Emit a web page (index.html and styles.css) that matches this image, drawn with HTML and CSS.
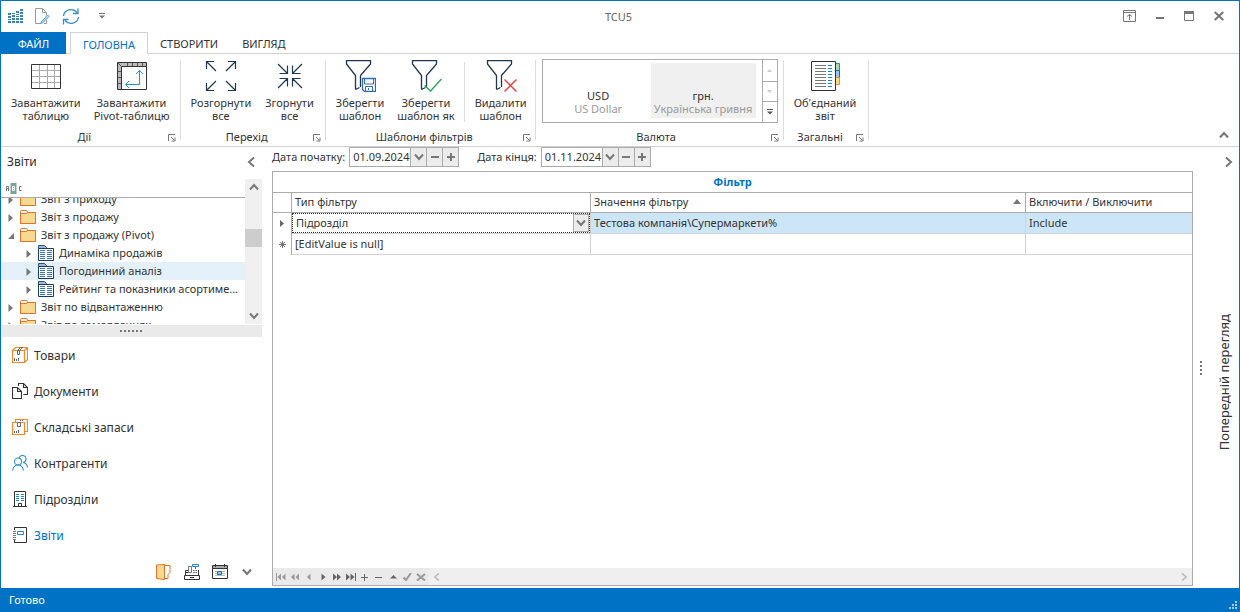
FILE: index.html
```
<!DOCTYPE html>
<html lang="uk">
<head>
<meta charset="utf-8">
<title>TCU5</title>
<link rel="stylesheet" href="styles.css">
</head>
<body>
<svg class="defs" aria-hidden="true">
  <symbol id="launcher" viewBox="0 0 8 8"><path d="M.5 7V.5H7M3 3l3.5 3.5M7 3.5V7H3.5" fill="none" stroke="#777"/></symbol>
  <symbol id="funnel" viewBox="0 0 32 32"><path d="M11.5 29.5V15.5L2.5 4V.5H26.5V4L16.5 15.5V27M11.5 29.5l4-2" fill="none" stroke="#1f3550" stroke-width="1.3"/></symbol>
  <symbol id="chev-down" viewBox="0 0 10 8"><path d="M1 1.5L5 6l4-4.500" fill="none" stroke="#777" stroke-width="2"/></symbol>
  <symbol id="chev-left" viewBox="0 0 8 10"><path d="M7 .5L2 5l5 4.500" fill="none" stroke="currentColor" stroke-width="2"/></symbol>
  <symbol id="chev-right" viewBox="0 0 8 10"><path d="M1 .5L6 5 1 9.500" fill="none" stroke="currentColor" stroke-width="2"/></symbol>
  <symbol id="folder" viewBox="0 0 16 14"><path d="M.5 13.500V1.500Q.5.5 1.500.5H6.500L8 2.500H15.500V13.500Z" fill="#fff" stroke="#e07328"/><path d="M1 3.500H7L9 2.500H15.500V13.500H1Z" fill="#f8d990"/><path d="M.5 13.500V3.500H6L8 2.500H15.500V13.500Z" fill="none" stroke="#e07328"/></symbol>
  <symbol id="report" viewBox="0 0 16 16"><path d="M.5 4V.5H6.500L8.500 2.500V4" fill="#9dbbdc" stroke="#2b527e"/><path d="M.5 3.500H15.500V15.500H.5Z" fill="#fff" stroke="#1f3a5c"/><path d="M2 5.500h5M9 5.500h5M2 7.500h5M9 7.500h5M2 9.500h5M9 9.500h5M2 11.500h5M9 11.500h5M2 13.500h5M9 13.500h5" stroke="#3c77b5"/></symbol>
  <symbol id="closed" viewBox="0 0 5 8"><path d="M0 0L4.500 4 0 8Z" fill="#777"/></symbol>
</svg>
<div class="app">
  <header class="titlebar">
    <div class="quick">
      <svg width="15" height="14" viewBox="0 0 15 14"><g fill="#3f81ad"><path d="M0 4h3v2H0zM0 7h3v2H0zM0 10h3v1H0zM0 12h3v2H0zM4 4h3v1H4zM4 6h3v2H4zM4 9h3v2H4zM4 12h3v2H4zM8 2h3v2H8zM8 5h3v1H8zM8 7h3v1H8zM8 9h3v2H8zM8 12h3v2H8zM12 0h3v2h-3zM12 3h3v2h-3zM12 6h3v2h-3zM12 9h3v2h-3zM12 12h3v2h-3z"/></g></svg>
      <svg width="15" height="16" viewBox="0 0 15 16"><path d="M5 15.500H.5V.5H7.500L11.500 4.500V7M7.500.5V4.500H11.500M11.500 12v3.500H9" fill="none" stroke="#999"/><path d="M6 14.500L12.500 7 14 8.500 7.500 15 5.500 15.500Z" fill="#cfe6f6" stroke="#4a92c8"/></svg>
      <svg width="18" height="17" viewBox="0 0 18 17"><path d="M1.500 8A7.500 7 0 0 1 15 4.500M16.500 9A7.500 7 0 0 1 3 12.500M16 .5V5.500H11M1.500 16.500V11.500H6.500" fill="none" stroke="#3d8cc4" stroke-width="1.300"/></svg>
      <svg class="quick-more" width="6" height="6" viewBox="0 0 6 6"><path d="M0 0h6v1H0zM0 2.500h6L3 5.500z" fill="#777"/></svg>
    </div>
    <h1 class="title">TCU5</h1>
    <div class="window-buttons">
      <svg width="13" height="12" viewBox="0 0 13 12"><path d="M.5.5h12v11H.5zM.5 2.500h12M6.500 10V4.500M4 6.500l2.500-2 2.500 2" fill="none" stroke="#777"/></svg>
      <svg width="8" height="12" viewBox="0 0 8 12"><path d="M0 7h8v2H0z" fill="#777"/></svg>
      <svg width="10" height="10" viewBox="0 0 10 10"><path d="M.5.5h9v9h-9z" fill="none" stroke="#777"/><path d="M0 0h10v3H0z" fill="#777"/></svg>
      <svg width="10" height="10" viewBox="0 0 10 10"><path d="M.7 1L9.300 9M9.300 1L.7 9" stroke="#777" stroke-width="2.200"/></svg>
    </div>
  </header>

  <nav class="tabs">
    <button class="tab tab-file">ФАЙЛ</button>
    <button class="tab tab-active">ГОЛОВНА</button>
    <button class="tab">СТВОРИТИ</button>
    <button class="tab">ВИГЛЯД</button>
  </nav>

  <section class="ribbon">
    <div class="group">
      <div class="tools">
        <button class="tool">
          <svg width="32" height="32" viewBox="0 0 32 32"><path d="M9.500 4v25M17.500 4v25M24.500 4v25M1 10.500h30M1 16.500h30M1 22.500h30" stroke="#aaa"/><path d="M1.500 4.500h29v24h-29z" fill="none" stroke="#333"/></svg>
          <span>Завантажити<br>таблицю</span>
        </button>
        <button class="tool">
          <svg width="32" height="32" viewBox="0 0 32 32"><path d="M1.500 2.500h29v4H5.500v23h-4z" fill="#bbb"/><path d="M11.500 3v3M16.500 3v3M21.500 3v3M26.500 3v3M2 11.500h3M2 17.500h3M2 23.500h3M2 3l3 3" stroke="#555"/><path d="M1.500 2.500h29v27h-29zM5.500 29V6.500h25" fill="none" stroke="#333"/><path d="M23.500 11V24.500H10M20 14l3.500-3.500L27 14M13 21l-3.500 3.500L13 28" fill="none" stroke="#2f8fd0"/></svg>
          <span>Завантажити<br>Pivot-таблицю</span>
        </button>
      </div>
      <div class="caption"><span>Дії</span><svg width="8" height="8"><use href="#launcher"/></svg></div>
    </div>
    <span class="sep"></span>
    <div class="group">
      <div class="tools tools-expand">
        <button class="tool">
          <svg width="32" height="32" viewBox="0 0 32 32"><path d="M11 11L1.500 1.500M9 1.500H1.500V9M21 11l9.500-9.500M23 1.500h7.500V9M11 21l-9.500 9.500M9 30.500H1.500V23M21 21l9.500 9.500M23 30.500h7.500V23" fill="none" stroke="#1f3550" stroke-width="1.200"/></svg>
          <span>Розгорнути<br>все</span>
        </button>
        <button class="tool">
          <svg width="32" height="32" viewBox="0 0 32 32"><path d="M4 4l9.500 9.500M5.500 13.500h8V5.500M28 4l-9.500 9.500M26.500 13.500h-8V5.500M4 28l9.500-9.500M5.500 18.500h8v8M28 28l-9.500-9.500M26.500 18.500h-8v8" fill="none" stroke="#1f3550" stroke-width="1.200"/></svg>
          <span>Згорнути<br>все</span>
        </button>
      </div>
      <div class="caption"><span>Перехід</span><svg width="8" height="8"><use href="#launcher"/></svg></div>
    </div>
    <span class="sep"></span>
    <div class="group">
      <div class="tools tools-filter">
        <button class="tool">
          <svg width="32" height="32" viewBox="0 0 32 32"><use href="#funnel"/><path d="M18.500 18.500h13v13h-11l-2-2z" fill="#fff" stroke="#2f6db0" stroke-width="1.300"/><path d="M20.500 19v5h9v-5M21.500 31v-4.500h7V31M24.500 28v2" fill="none" stroke="#2f6db0"/></svg>
          <span>Зберегти<br>шаблон</span>
        </button>
        <button class="tool">
          <svg width="32" height="32" viewBox="0 0 32 32"><use href="#funnel"/><path d="M14.500 25.500l6 5.500L31.500 19" fill="none" stroke="#27a858" stroke-width="1.400"/></svg>
          <span>Зберегти<br>шаблон як</span>
        </button>
        <span class="sep sep-inner"></span>
        <button class="tool">
          <svg width="32" height="32" viewBox="0 0 32 32"><use href="#funnel"/><path d="M19.500 19.500l12 12M31.500 19.500l-12 12" stroke="#ea3d3d" stroke-width="1.400"/></svg>
          <span>Видалити<br>шаблон</span>
        </button>
      </div>
      <div class="caption"><span>Шаблони фільтрів</span><svg width="8" height="8"><use href="#launcher"/></svg></div>
    </div>
    <span class="sep"></span>
    <div class="group group-gallery">
      <div class="gallery">
        <button class="currency"><b>USD</b><i>US Dollar</i></button>
        <button class="currency currency-on"><b>грн.</b><i>Українська гривня</i></button>
        <div class="gallery-nav">
          <button aria-label="Вгору"><svg width="5" height="3" viewBox="0 0 5 3"><path d="M0 3L2.500 0 5 3z" fill="#ccc"/></svg></button>
          <button aria-label="Вниз"><svg width="5" height="3" viewBox="0 0 5 3"><path d="M0 0L2.500 3 5 0z" fill="#ccc"/></svg></button>
          <button aria-label="Більше"><svg width="6" height="6" viewBox="0 0 6 6"><path d="M0 0h6v1H0zM0 2.500h6L3 5.500z" fill="#555"/></svg></button>
        </div>
      </div>
      <div class="caption"><span>Валюта</span><svg width="8" height="8"><use href="#launcher"/></svg></div>
    </div>
    <span class="sep"></span>
    <div class="group">
      <div class="tools tools-report">
        <button class="tool">
          <svg width="32" height="32" viewBox="0 0 32 32"><path d="M26.500 3.500h4v7h-4z" fill="#a9d9b5" stroke="#27a04f"/><path d="M26.500 10.500h4v7h-4z" fill="#8fc8ea" stroke="#1a6cb0"/><path d="M26.500 17.500h4v7h-4z" fill="#fbd98a" stroke="#ee8a2c"/><path d="M2.500 1.500h24v29h-24z" fill="#fff" stroke="#333"/><path d="M6 5.500h11M6 8.500h11M6 11.500h11M6 14.500h11M6 17.500h11M6 20.500h11M6 23.500h11M6 26.500h11" stroke="#777"/><path d="M19 5.500h4M19 8.500h4M19 11.500h4M19 14.500h4M19 17.500h4M19 20.500h4M19 23.500h4M19 26.500h4" stroke="#1e86cc"/></svg>
          <span>Об'єднаний<br>звіт</span>
        </button>
      </div>
      <div class="caption"><span>Загальні</span><svg width="8" height="8"><use href="#launcher"/></svg></div>
    </div>
    <span class="sep"></span>
    <button class="ribbon-collapse" aria-label="Згорнути стрічку"><svg width="10" height="8" viewBox="0 0 10 8"><path d="M1 6.500L5 2l4 4.500" fill="none" stroke="#777" stroke-width="2"/></svg></button>
  </section>

  <div class="body">
    <aside class="sidebar">
      <div class="side-head"><h2>Звіти</h2><button aria-label="Згорнути панель"><svg width="8" height="10"><use href="#chev-left"/></svg></button></div>
      <div class="tree-area">
        <div class="tree-main">
          <div class="tree-filter">
            <svg width="16" height="11" viewBox="0 0 16 11"><path d="M4.500 0h6v11h-6z" fill="#72a896"/><path d="M.5 8V3.500h2V8M.5 5.500h2M15.500 3.500h-2v4h2" fill="none" stroke="#777"/><path d="M6.500 3.500h2v4h-2zM6.500 5.500h2" fill="none" stroke="#fff"/></svg>
          </div>
          <div class="tree-view">
            <ul class="tree">
              <li><svg class="arrow" width="5" height="8"><use href="#closed"/></svg><svg width="16" height="14"><use href="#folder"/></svg><span>Звіт з приходу</span></li>
              <li><svg class="arrow" width="5" height="8"><use href="#closed"/></svg><svg width="16" height="14"><use href="#folder"/></svg><span>Звіт з продажу</span></li>
              <li><svg class="arrow" width="6" height="6" viewBox="0 0 6 6"><path d="M6 0v6H0z" fill="#777"/></svg><svg width="16" height="14"><use href="#folder"/></svg><span>Звіт з продажу (Pivot)</span></li>
              <li class="child"><svg class="arrow" width="5" height="8"><use href="#closed"/></svg><svg width="16" height="16"><use href="#report"/></svg><span>Динаміка продажів</span></li>
              <li class="child selected"><svg class="arrow" width="5" height="8"><use href="#closed"/></svg><svg width="16" height="16"><use href="#report"/></svg><span>Погодинний аналіз</span></li>
              <li class="child"><svg class="arrow" width="5" height="8"><use href="#closed"/></svg><svg width="16" height="16"><use href="#report"/></svg><span>Рейтинг та показники асортименту</span></li>
              <li><svg class="arrow" width="5" height="8"><use href="#closed"/></svg><svg width="16" height="14"><use href="#folder"/></svg><span>Звіт по відвантаженню</span></li>
              <li><svg class="arrow" width="5" height="8"><use href="#closed"/></svg><svg width="16" height="14"><use href="#folder"/></svg><span>Звіт по замовленнях</span></li>
            </ul>
          </div>
        </div>
        <div class="scrollbar">
          <svg width="10" height="8" viewBox="0 0 10 8"><path d="M1 6.500L5 2l4 4.500" fill="none" stroke="#777" stroke-width="2"/></svg>
          <div class="track"><span class="thumb"></span></div>
          <svg width="10" height="8"><use href="#chev-down"/></svg>
        </div>
      </div>
      <div class="splitter"><svg width="23" height="2" viewBox="0 0 23 2"><path d="M0 1h23" stroke="#777" stroke-width="2" stroke-dasharray="2 2"/></svg></div>
      <nav class="modules">
        <a href="#"><svg width="16" height="16" viewBox="0 0 16 16"><path d="M.5 3.500h12v12H.5zM.5 3.500l3-3h12v12l-3 3M12.500 3.500l3-3" fill="none" stroke="#ee8a2c" stroke-width="1.200"/><path d="M5.500 3.500h2v4h-2zM5.500 3.500l3-3h2l-3 3M2.500 11v3M4.500 12v2M6.500 11v3" fill="none" stroke="#666"/></svg>Товари</a>
        <a href="#"><svg width="16" height="16" viewBox="0 0 16 16"><path d="M.5 4.500h5l4 4v7h-9zM5.500 4.500v4h4M6.500 3V.5h5l4 4v7h-4M11.500.5v4h4" fill="none" stroke="#333" stroke-width="1.100"/></svg>Документи</a>
        <a href="#"><svg width="16" height="16" viewBox="0 0 16 16"><path d="M.5 3.500h12v12H.5zM3.500 3V.5h12v12h-3" fill="none" stroke="#ee8a2c" stroke-width="1.200"/><path d="M5.500 3.500h3v4h-3zM8.500 1v1M10.500 1v1M2.500 12v2M4.500 12v2M6.500 11v3" fill="none" stroke="#666"/></svg>Складські запаси</a>
        <a href="#"><svg width="16" height="16" viewBox="0 0 16 16"><g fill="none" stroke="#3091cf" stroke-width="1.100"><circle cx="6" cy="6.500" r="3.500"/><path d="M.5 15.500Q1.500 10 6 10t5.500 5.500M7 3Q7.500.5 10.500.5 14 .5 14 4q0 3-3 3.500 4 .5 4.500 5"/></g></svg>Контрагенти</a>
        <a href="#"><svg width="16" height="16" viewBox="0 0 16 16"><path d="M2.500 15.500V.5h11v15M1 15.500h14M6.500 15.500v-3h3v3" fill="none" stroke="#333"/><path d="M4 3.500h3M9 3.500h3M4 5.500h3M9 5.500h3M4 7.500h3M9 7.500h3M4 9.500h3M9 9.500h3" stroke="#1e86cc"/></svg>Підрозділи</a>
        <a href="#" class="current"><svg width="16" height="16" viewBox="0 0 16 16"><path d="M2.500 3V.5h12v15h-12V13M2.500 15.500V14" fill="none" stroke="#333"/><path d="M1 4.500h3M1 6.500h3M1 8.500h3M1 10.500h3M1 12.500h3" stroke="#777"/><path d="M5.500 4.500h6v3h-6z" fill="none" stroke="#1e86cc"/></svg>Звіти</a>
      </nav>
      <div class="shortcuts">
        <svg width="16" height="16" viewBox="0 0 16 16"><path d="M9 1.500h5v7l-2 2v4H9" fill="#fff" stroke="#e07328"/><path d="M.5 1l8-.5v15l-8-1z" fill="#f8d990" stroke="#e07328"/></svg>
        <svg width="16" height="16" viewBox="0 0 16 16"><path d="M.5 11.500h15v4H.5zM1.500 11V6.500h3M1.500 8.500h3M14.500 6v5M6 13.500h4" fill="none" stroke="#333"/><path d="M4.500 8.500v-6h3v6z" fill="#fff" stroke="#777"/><path d="M8.500.5h6v2h-6zM11.500 3v2" fill="none" stroke="#1e86cc"/><path d="M9 6.500h4M9 8.500h4" stroke="#555" stroke-dasharray="1 .5"/></svg>
        <svg width="16" height="15" viewBox="0 0 16 15"><path d="M.5 1.500h15v3H.5z" fill="#aaa"/><path d="M.5 1.500h15v13H.5zM.5 4.500h15M3.500 0v3M12.500 0v3" fill="none" stroke="#333"/><path d="M3 7.500h10M3 9.500h10M3 11.500h10" stroke="#bbb"/><path d="M5.500 7.500h4v3h-4z" fill="#8fc8ea" stroke="#1a6cb0"/></svg>
        <svg width="10" height="8"><use href="#chev-down"/></svg>
      </div>
    </aside>

    <main class="content">
      <div class="dates">
        <label for="from">Дата початку:</label>
        <div class="datebox"><input id="from" type="text" value="01.09.2024"><button aria-label="Календар"><svg width="10" height="8"><use href="#chev-down"/></svg></button><button aria-label="Менше"><svg width="8" height="8" viewBox="0 0 8 8"><path d="M0 4h8" stroke="#777" stroke-width="2"/></svg></button><button aria-label="Більше"><svg width="8" height="8" viewBox="0 0 8 8"><path d="M0 4h8M4 0v8" stroke="#777" stroke-width="2"/></svg></button></div>
        <label for="to" class="label-to">Дата кінця:</label>
        <div class="datebox"><input id="to" type="text" value="01.11.2024"><button aria-label="Календар"><svg width="10" height="8"><use href="#chev-down"/></svg></button><button aria-label="Менше"><svg width="8" height="8" viewBox="0 0 8 8"><path d="M0 4h8" stroke="#777" stroke-width="2"/></svg></button><button aria-label="Більше"><svg width="8" height="8" viewBox="0 0 8 8"><path d="M0 4h8M4 0v8" stroke="#777" stroke-width="2"/></svg></button></div>
      </div>
      <div class="grid">
        <table>
          <colgroup><col class="c-mark"><col class="c-type"><col class="c-value"><col></colgroup>
          <thead>
            <tr><th colspan="4" class="band">Фільтр</th></tr>
            <tr><th></th><th>Тип фільтру</th><th><div class="sorted">Значення фільтру<svg width="8" height="5" viewBox="0 0 8 5"><path d="M0 5l4-5 4 5z" fill="#777"/></svg></div></th><th>Включити / Виключити</th></tr>
          </thead>
          <tbody>
            <tr class="row-on">
              <td class="mark"><svg width="4" height="7" viewBox="0 0 4 7"><path d="M0 0l4 3.500L0 7z" fill="#666"/></svg></td>
              <td class="edit"><div class="combo"><select aria-label="Тип фільтру"><option>Підрозділ</option></select><button aria-label="Відкрити"><svg width="10" height="8"><use href="#chev-down"/></svg></button></div></td>
              <td>Тестова компанія\Супермаркети%</td><td>Include</td>
            </tr>
            <tr>
              <td class="mark"><svg width="7" height="7" viewBox="0 0 7 7"><path d="M3.500 0v7M0 3.500h7M1 1l5 5M6 1L1 6" stroke="#777"/></svg></td>
              <td>[EditValue is null]</td><td></td><td></td>
            </tr>
          </tbody>
        </table>
        <div class="navigator">
          <div class="nav-tools">
            <svg width="10" height="8" viewBox="0 0 10 8"><path d="M0 0h1v8H0zM5 .5v7L1.500 4zM9.500 .5v7L6 4z" fill="#999"/></svg>
            <svg width="10" height="8" viewBox="0 0 10 8"><path d="M4.500 .5v7L1 4zM9 .5v7L5.500 4z" fill="#999"/></svg>
            <svg width="10" height="8" viewBox="0 0 10 8"><path d="M6.500 .5v7L3 4z" fill="#999"/></svg>
            <svg width="10" height="8" viewBox="0 0 10 8"><path d="M3.500 .5v7L7.500 4z" fill="#666"/></svg>
            <svg width="10" height="8" viewBox="0 0 10 8"><path d="M1 .5v7l4-3.500zM5 .5v7l4-3.500z" fill="#666"/></svg>
            <svg width="10" height="8" viewBox="0 0 10 8"><path d="M0 .5v7l4-3.500zM4.500 .5v7l4-3.500zM9 0h1v8H9z" fill="#666"/></svg>
            <svg width="10" height="8" viewBox="0 0 10 8"><path d="M1 4.500h7M4.500 1v7" stroke="#666"/></svg>
            <svg width="10" height="8" viewBox="0 0 10 8"><path d="M1 4.500h7" stroke="#666"/></svg>
            <svg width="10" height="8" viewBox="0 0 10 8"><path d="M2 5.500h7L5.500 2z" fill="#666"/></svg>
            <svg width="10" height="8" viewBox="0 0 10 8"><path d="M1.500 4.500L4 7 9 0" fill="none" stroke="#999" stroke-width="2"/></svg>
            <svg width="10" height="8" viewBox="0 0 10 8"><path d="M1 1l8 6.500M9 1L1 7.500" stroke="#999" stroke-width="2"/></svg>
          </div>
          <div class="hscroll"><svg width="7" height="8"><use href="#chev-left"/></svg><svg width="7" height="8"><use href="#chev-right"/></svg></div>
        </div>
      </div>
    </main>

    <div class="gutter"><svg width="2" height="14" viewBox="0 0 2 14"><path d="M1 0v14" stroke="#777" stroke-width="2" stroke-dasharray="2 2"/></svg></div>
    <aside class="preview">
      <button class="expand" aria-label="Розгорнути"><svg width="8" height="10"><use href="#chev-right"/></svg></button>
      <span class="vertical">Попередній перегляд</span>
    </aside>
  </div>

  <footer class="status"><span>Готово</span><svg width="8" height="8" viewBox="0 0 8 8"><path d="M6 0h2v2H6zM3 3h2v2H3zM6 3h2v2H6zM0 6h2v2H0zM3 6h2v2H3zM6 6h2v2H6z" fill="#a9c9e4"/></svg></footer>
</div>
</body>
</html>
```
FILE: styles.css
```
* { box-sizing: border-box; }
body { margin: 0; background: #fff; color: #333; font: 11px/13px "Noto Sans", "Open Sans", sans-serif; }
button, input, select { margin: 0; padding: 0; border: 0; border-radius: 0; background: none; color: inherit; font: inherit; outline: 0; }
button { display: flex; align-items: center; justify-content: center; }
h1, h2, ul { margin: 0; padding: 0; font: inherit; list-style: none; }
a { color: inherit; text-decoration: none; }
svg { display: block; flex: none; }
.defs { position: absolute; width: 0; height: 0; }

.app { display: flex; flex-direction: column; height: 100vh; border: 1px solid #0072c6; border-bottom: 0; }

/* Title bar */
.titlebar { display: grid; grid-template-columns: 1fr auto 1fr; align-items: center; height: 31px; flex: none; padding: 0 15px 1px 7px; }
.quick { display: flex; align-items: center; gap: 12px; }
.quick-more { margin-left: 7px; }
.title { padding-left: 5px; color: #666; }
.window-buttons { display: flex; align-items: center; justify-content: flex-end; gap: 20px; }

/* Tabs */
.tabs { display: flex; flex: none; height: 22px; border-bottom: 1px solid #d2d2d2; }
.tab { padding: 2px 12px 0; height: 21px; }
.tab-file { width: 65px; margin-right: 4px; height: 22px; padding-top: 0; background: #0072c6; color: #fff; }
.tab-active { height: 22px; padding-top: 1px; border: 1px solid #d2d2d2; border-bottom: 0; background: #fff; color: #0072c6; }

/* Ribbon */
.ribbon { display: flex; flex: none; height: 93px; padding-top: 5px; border-bottom: 1px solid #d2d2d2; }
.group { display: flex; flex-direction: column; }
.sep { width: 1px; height: 80px; margin-top: 1px; background: #dcdcdc; }
.sep-inner { height: 60px; margin: 2px 3px 0 2px; }
.tools { display: flex; gap: 1px; height: 70px; padding: 1px 4px 0; }
.tools-expand { gap: 2px; padding-right: 5px; }
.tools-filter { padding-right: 2px; }
.tools-report { padding-right: 6px; }
.tool { flex-direction: column; justify-content: flex-start; gap: 4px; padding: 0 6px; text-align: center; }
.caption { display: flex; align-items: center; height: 14px; padding-right: 4px; }
.caption span { flex: 1; text-align: center; }
.caption svg { margin-top: 3px; }
.group-gallery { padding: 0 0 0 6px; }
.gallery { display: flex; height: 64px; margin: 0 5px 6px 0; padding-left: 3px; border: 1px solid #ababab; }
.currency { flex-direction: column; justify-content: flex-end; width: 105px; height: 55px; margin-top: 3px; padding-bottom: 3px; }
.currency b, .currency i { font: inherit; white-space: nowrap; }
.currency i { color: #999; }
.currency-on { background: #f0f0f0; }
.gallery-nav { display: grid; grid-template-rows: repeat(3, 1fr); width: 15px; margin-left: 6px; border-left: 1px solid #ababab; }
.gallery-nav button + button { border-top: 1px solid #ababab; }
.ribbon-collapse { align-self: flex-end; margin: 0 10px 7px auto; }

/* Body */
.body { display: flex; flex: 1; min-height: 0; }
.sidebar { display: flex; flex-direction: column; width: 261px; margin-right: 10px; }
.side-head { display: flex; justify-content: space-between; height: 32px; padding: 6px 7px 0 6px; font-size: 12px; }
.side-head h2 { line-height: 18px; }
.side-head button { height: 18px; color: #777; }
.tree-area { display: flex; flex: 1; min-height: 0; }
.tree-main { display: flex; flex: 1; flex-direction: column; min-width: 0; }
.tree-filter { flex: none; height: 19px; padding: 4px 5px 0; border-bottom: 1px solid #ababab; }
.tree-view { flex: 1; overflow: hidden; }
.tree { margin-top: -8px; }
.tree li { display: flex; align-items: center; height: 18px; padding-left: 7px; }
.tree li.child { padding-left: 25px; }
.tree .selected { background: #e4f0fa; }
.tree .arrow { width: 6px; margin: 2px 6px 0 0; }
.tree span { flex: 1; margin: 0 5px; padding-bottom: 2px; overflow: hidden; text-overflow: ellipsis; white-space: nowrap; }
.scrollbar { display: flex; flex-direction: column; align-items: center; width: 17px; padding: 4px 0; background: #f0f0f0; }
.track { flex: 1; width: 100%; padding-top: 38px; }
.thumb { display: block; height: 18px; background: #cdcdcd; }
.splitter { display: flex; align-items: center; justify-content: center; flex: none; height: 12px; margin-top: 1px; background: #eaeaea; }
.modules a { display: flex; align-items: center; gap: 6px; height: 36px; padding-left: 11px; font-size: 12px; }
.modules .current { color: #0072c6; }
.shortcuts { display: flex; align-items: center; justify-content: flex-end; gap: 12px; height: 35px; padding: 2px 10px 0 0; }
.shortcuts svg:last-child { margin-left: 2px; }

.content { display: flex; flex: 1; flex-direction: column; min-width: 0; padding-bottom: 2px; }
.dates { display: flex; align-items: center; height: 20px; margin-bottom: 4px; gap: 4px; }
.dates label { padding-bottom: 2px; }
.label-to { margin-left: 14px; }
.datebox { display: flex; height: 20px; border: 1px solid #ababab; }
.datebox input { width: 60px; padding: 0 0 2px 3px; }
.datebox button { width: 16px; border-left: 1px solid #ababab; background: #ececec; }

.grid { display: flex; flex: 1; flex-direction: column; justify-content: space-between; border: 1px solid #ababab; }
table { width: 100%; table-layout: fixed; border-spacing: 0; }
.c-mark { width: 19px; }
.c-type { width: 299px; }
.c-value { width: 435px; }
th, td { height: 21px; padding: 0 4px 2px 3px; text-align: left; font-weight: 400; white-space: nowrap; border-right: 1px solid #d2d2d2; border-bottom: 1px solid #d2d2d2; }
th { height: 20px; padding-bottom: 2px; border-color: #ababab; }
.band { height: 21px; padding: 0 0 2px; text-align: center; font-weight: 700; color: #0072c6; }
th:last-child, td:last-child { border-right: 0; }
.sorted { display: flex; align-items: center; justify-content: space-between; }
.row-on td { background: #cde6f7; }
.row-on .mark, .row-on .edit { background: #fff; }
.mark { padding: 0; border-right-color: #ababab; border-bottom: 0; }
.mark svg { margin: 0 auto; }
.edit { padding: 0; }
.combo { display: flex; height: 20px; border: 1px dotted #333; }
.combo select { flex: 1; padding: 0 0 1px 3px; appearance: none; }
.combo button { width: 16px; border: 1px solid #ababab; background: #ececec; }
.navigator { display: flex; height: 17px; background: #efefef; }
.nav-tools { display: flex; align-items: center; gap: 4px; padding: 0 3px; background: #eaeaea; }
.hscroll { display: flex; flex: 1; align-items: center; justify-content: space-between; padding: 0 4px; color: #bbb; }

.gutter { display: flex; align-items: center; justify-content: center; width: 16px; }
.preview { display: flex; flex-direction: column; align-items: center; width: 30px; }
.expand { width: 100%; height: 29px; color: #777; padding-left: 10px; }
.vertical { margin: auto 0; writing-mode: vertical-rl; transform: rotate(180deg); font-size: 13px; }

/* Status bar */
.status { display: flex; align-items: center; justify-content: space-between; flex: none; height: 24px; margin: 0 -1px; padding: 0 3px 0 9px; background: #0072c6; color: #fff; }
.status span { padding-bottom: 2px; }
.status svg { align-self: flex-end; margin-bottom: 3px; }
```
